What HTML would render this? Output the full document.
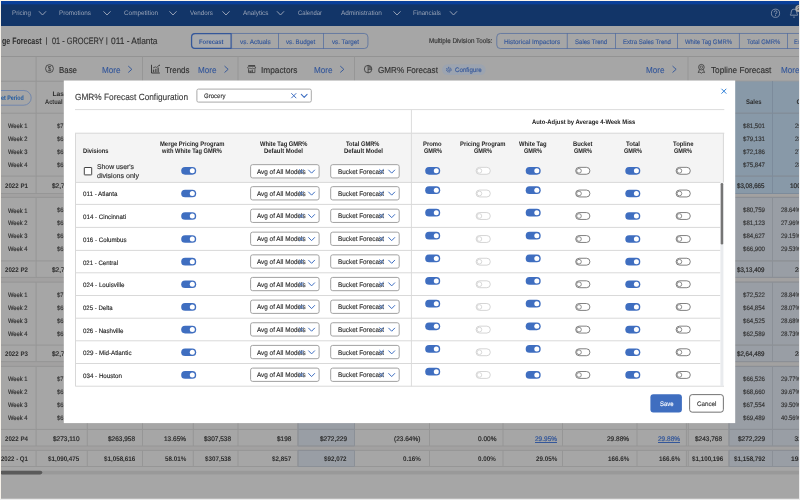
<!DOCTYPE html>
<html><head><meta charset="utf-8"><title>GMR% Forecast Configuration</title>
<style>
html,body{margin:0;padding:0;background:#ececec;}
body{width:800px;height:500px;overflow:hidden;position:relative;font-family:"Liberation Sans",sans-serif;}
#clip{position:absolute;left:1px;top:1px;width:798px;height:497px;overflow:hidden;background:#a6a6a6;}
.edge{position:absolute;}
#page{position:absolute;left:-1px;top:-1px;width:800px;height:500px;will-change:transform;}
#page div,#page span,#page svg{position:absolute;display:block;}
#page span{white-space:nowrap;transform-origin:0 50%;line-height:20px;text-rendering:geometricPrecision;}
</style></head><body>
<div class="edge" style="left:0;top:0;width:800px;height:1px;background:#fbf5ea"></div><div class="edge" style="left:0;top:0;width:1px;height:499px;background:#f7f2ea"></div><div class="edge" style="left:1px;top:498px;width:798px;height:1px;background:#b9b9b9"></div>
<div id="clip"><div id="page">
<svg style="left:0;top:0" width="800" height="500"><rect x="0" y="0" width="800" height="26" fill="#123568"/></svg>
<div style="left:0.00px;top:0.00px;width:800.00px;height:4.50px;background:linear-gradient(#0a409a 0%,#0a409a 70%,#123568 100%)"></div>
<span style="left:12.00px;top:4px;font-size:6.6px;color:#97a2b6;transform:scaleX(0.9418);">Pricing</span>
<svg style="left:0;top:0" width="800" height="500"><g transform="translate(38.25 10.6)"><path d="M1 1 L4.25 4.40 L7.50 1" fill="none" stroke="#97a2b6" stroke-width="1.0" stroke-linecap="round" stroke-linejoin="round"/></g></svg>
<span style="left:59.00px;top:4px;font-size:6.6px;color:#97a2b6;transform:scaleX(0.9586);">Promotions</span>
<svg style="left:0;top:0" width="800" height="500"><g transform="translate(102.75 10.6)"><path d="M1 1 L4.25 4.40 L7.50 1" fill="none" stroke="#97a2b6" stroke-width="1.0" stroke-linecap="round" stroke-linejoin="round"/></g></svg>
<span style="left:124.00px;top:4px;font-size:6.6px;color:#97a2b6;transform:scaleX(0.9654);">Competition</span>
<svg style="left:0;top:0" width="800" height="500"><g transform="translate(168.75 10.6)"><path d="M1 1 L4.25 4.40 L7.50 1" fill="none" stroke="#97a2b6" stroke-width="1.0" stroke-linecap="round" stroke-linejoin="round"/></g></svg>
<span style="left:189.50px;top:4px;font-size:6.6px;color:#97a2b6;transform:scaleX(0.9497);">Vendors</span>
<svg style="left:0;top:0" width="800" height="500"><g transform="translate(221.75 10.6)"><path d="M1 1 L4.25 4.40 L7.50 1" fill="none" stroke="#97a2b6" stroke-width="1.0" stroke-linecap="round" stroke-linejoin="round"/></g></svg>
<span style="left:242.50px;top:4px;font-size:6.6px;color:#97a2b6;transform:scaleX(0.9655);">Analytics</span>
<svg style="left:0;top:0" width="800" height="500"><g transform="translate(276.25 10.6)"><path d="M1 1 L4.25 4.40 L7.50 1" fill="none" stroke="#97a2b6" stroke-width="1.0" stroke-linecap="round" stroke-linejoin="round"/></g></svg>
<span style="left:298.00px;top:4px;font-size:6.6px;color:#97a2b6;transform:scaleX(0.8960);">Calendar</span>
<span style="left:341.00px;top:4px;font-size:6.6px;color:#97a2b6;transform:scaleX(0.9804);">Administration</span>
<svg style="left:0;top:0" width="800" height="500"><g transform="translate(392.75 10.6)"><path d="M1 1 L4.25 4.40 L7.50 1" fill="none" stroke="#97a2b6" stroke-width="1.0" stroke-linecap="round" stroke-linejoin="round"/></g></svg>
<span style="left:412.50px;top:4px;font-size:6.6px;color:#97a2b6;transform:scaleX(0.9423);">Financials</span>
<svg style="left:0;top:0" width="800" height="500"><g transform="translate(449.25 10.6)"><path d="M1 1 L4.25 4.40 L7.50 1" fill="none" stroke="#97a2b6" stroke-width="1.0" stroke-linecap="round" stroke-linejoin="round"/></g><g transform="translate(770 7.75)"><circle cx="5.5" cy="5.5" r="4.1" fill="none" stroke="#97a2b6" stroke-width="0.8"/><path d="M4.1 4.5 A1.45 1.45 0 1 1 5.5 5.9 L5.5 6.6" fill="none" stroke="#97a2b6" stroke-width="0.8"/><circle cx="5.5" cy="7.8" r="0.5" fill="#97a2b6"/></g><g transform="translate(788 7)"><path d="M2.4 8.2 L2.4 7.6 Q3.2 7 3.2 5 Q3.2 2.1 6 2.1 Q8.8 2.1 8.8 5 Q8.8 7 9.6 7.6 L9.6 8.2 Z" fill="none" stroke="#97a2b6" stroke-width="0.8" stroke-linejoin="round"/><path d="M5.2 10.1 L6.8 10.1" stroke="#97a2b6" stroke-width="0.8"/></g><rect x="795.3" y="5" width="7" height="7" rx="3.5" fill="#a8a8a8"/></svg>
<span style="left:797.30px;top:-1px;font-size:5px;color:#333;-webkit-text-stroke:0.13px;">2</span>
<span style="left:1.50px;top:31px;font-size:9.3px;color:#2e2e2e;font-weight:bold;transform:scaleX(0.7566);">ge Forecast</span>
<span style="left:45.46px;top:31px;font-size:8px;color:#303030;-webkit-text-stroke:0.13px;">|</span>
<span style="left:51.70px;top:31px;font-size:9.3px;color:#303030;-webkit-text-stroke:0.13px;transform:scaleX(0.7897);">01 - GROCERY</span>
<span style="left:105.76px;top:31px;font-size:8px;color:#303030;-webkit-text-stroke:0.13px;">|</span>
<span style="left:110.50px;top:31px;font-size:9.3px;color:#303030;-webkit-text-stroke:0.13px;transform:scaleX(0.9023);">011 - Atlanta</span>
<svg style="left:0;top:0" width="800" height="500"><path d="M195 33.1 H231.7 V48.9 H195 A4 4 0 0 1 191 44.9 V37.1 A4 4 0 0 1 195 33.1 Z" fill="#a8aaad"/><rect x="191.38" y="33.48" width="176.55" height="15.05" rx="3.62" fill="none" stroke="#526c9f" stroke-width="0.75"/><path d="M195 33.7 H231.1 V48.3 H195 A3.4 3.4 0 0 1 191.6 44.9 V37.1 A3.4 3.4 0 0 1 195 33.7 Z" fill="none" stroke="#34579a" stroke-width="1.2"/></svg>
<span style="left:199.10px;top:33px;font-size:6.6px;color:#34579a;font-weight:bold;transform:scaleX(0.8905);">Forecast</span>
<svg style="left:0;top:0" width="800" height="500"><rect x="231.32" y="33.1" width="0.75" height="15.8" fill="#526c9f"/></svg>
<span style="left:239.67px;top:33px;font-size:6.6px;color:#34579a;-webkit-text-stroke:0.13px;transform:scaleX(0.9747);">vs. Actuals</span>
<svg style="left:0;top:0" width="800" height="500"><rect x="278.02" y="33.1" width="0.75" height="15.8" fill="#526c9f"/></svg>
<span style="left:286.32px;top:33px;font-size:6.6px;color:#34579a;-webkit-text-stroke:0.13px;transform:scaleX(0.9379);">vs. Budget</span>
<svg style="left:0;top:0" width="800" height="500"><rect x="323.12" y="33.1" width="0.75" height="15.8" fill="#526c9f"/></svg>
<span style="left:332.40px;top:33px;font-size:6.6px;color:#34579a;-webkit-text-stroke:0.13px;transform:scaleX(0.9476);">vs. Target</span>
<span style="left:429.00px;top:32px;font-size:6.9px;color:#303030;-webkit-text-stroke:0.13px;transform:scaleX(0.9115);">Multiple Division Tools:</span>
<svg style="left:0;top:0" width="800" height="500"><rect x="496.77" y="33.48" width="332.85" height="15.05" rx="3.62" fill="none" stroke="#526c9f" stroke-width="0.75"/></svg>
<span style="left:503.67px;top:33px;font-size:6.6px;color:#34579a;-webkit-text-stroke:0.13px;transform:scaleX(0.9707);">Historical Impactors</span>
<svg style="left:0;top:0" width="800" height="500"><rect x="566.83" y="33.1" width="0.75" height="15.8" fill="#526c9f"/></svg>
<span style="left:575.23px;top:33px;font-size:6.6px;color:#34579a;-webkit-text-stroke:0.13px;transform:scaleX(0.9156);">Sales Trend</span>
<svg style="left:0;top:0" width="800" height="500"><rect x="615.12" y="33.1" width="0.75" height="15.8" fill="#526c9f"/></svg>
<span style="left:622.55px;top:33px;font-size:6.6px;color:#34579a;-webkit-text-stroke:0.13px;transform:scaleX(0.9150);">Extra Sales Trend</span>
<svg style="left:0;top:0" width="800" height="500"><rect x="677.23" y="33.1" width="0.75" height="15.8" fill="#526c9f"/></svg>
<span style="left:684.95px;top:33px;font-size:6.6px;color:#34579a;-webkit-text-stroke:0.13px;transform:scaleX(0.8982);">White Tag GMR%</span>
<svg style="left:0;top:0" width="800" height="500"><rect x="738.92" y="33.1" width="0.75" height="15.8" fill="#526c9f"/></svg>
<span style="left:746.83px;top:33px;font-size:6.6px;color:#34579a;-webkit-text-stroke:0.13px;transform:scaleX(0.8976);">Total GMR%</span>
<svg style="left:0;top:0" width="800" height="500"><rect x="787.23" y="33.1" width="0.75" height="15.8" fill="#526c9f"/></svg>
<span style="left:794.30px;top:33px;font-size:6.6px;color:#34579a;-webkit-text-stroke:0.13px;transform:scaleX(0.8593);">Extra Sales</span>
<svg style="left:0;top:0" width="800" height="500"><rect x="0" y="56" width="800" height="1" fill="#939393"/><rect x="35.6" y="56.5" width="1" height="24.5" fill="#969696"/><rect x="142" y="56.5" width="1" height="24.5" fill="#969696"/><rect x="237.5" y="56.5" width="1" height="24.5" fill="#969696"/><rect x="354" y="56.5" width="1" height="24.5" fill="#969696"/><rect x="687.5" y="56.5" width="1" height="24.5" fill="#969696"/><g transform="translate(44.5 63.6)"><circle cx="5" cy="5" r="3.95" fill="none" stroke="#303030" stroke-width="0.75"/><text x="5" y="7.2" font-size="6.4" text-anchor="middle" fill="#303030" font-family="Liberation Sans">$</text></g></svg>
<span style="left:59.00px;top:60px;font-size:8.7px;color:#303030;-webkit-text-stroke:0.13px;transform:scaleX(0.9077);">Base</span>
<span style="left:101.50px;top:60px;font-size:8.7px;color:#34579a;-webkit-text-stroke:0.13px;transform:scaleX(0.9333);">More</span>
<svg style="left:0;top:0" width="800" height="500"><g transform="translate(127.55 65.35)"><path d="M1 1 L4.30 3.95 L1 6.90" fill="none" stroke="#34579a" stroke-width="0.95" stroke-linecap="round" stroke-linejoin="round"/></g><g transform="translate(150.5 64)"><path d="M1 0.8 L1 9 L9.4 9" fill="none" stroke="#303030" stroke-width="0.9"/><rect x="2.4" y="5.6" width="1.3" height="2.7" fill="#4a4a4a"/><rect x="4.7" y="4.8" width="1.3" height="3.5" fill="#4a4a4a"/><rect x="7" y="3.6" width="1.3" height="4.7" fill="#4a4a4a"/><path d="M2.6 3.9 L4.9 2.9 L6.2 3.4 L8.8 1.2" fill="none" stroke="#303030" stroke-width="0.7"/><circle cx="8.8" cy="1.3" r="0.6" fill="#303030"/></g></svg>
<span style="left:165.00px;top:60px;font-size:8.7px;color:#303030;-webkit-text-stroke:0.13px;transform:scaleX(0.9157);">Trends</span>
<span style="left:198.00px;top:60px;font-size:8.7px;color:#34579a;-webkit-text-stroke:0.13px;transform:scaleX(0.9333);">More</span>
<svg style="left:0;top:0" width="800" height="500"><g transform="translate(223.85 65.35)"><path d="M1 1 L4.30 3.95 L1 6.90" fill="none" stroke="#34579a" stroke-width="0.95" stroke-linecap="round" stroke-linejoin="round"/></g><g transform="translate(246.7 64)"><path d="M1.6 1.5 H8.4" stroke="#303030" stroke-width="0.8"/><path d="M1.7 2.4 L0.9 4 Q1.7 5.1 2.6 4.2 Q3.4 5.1 4.2 4.2 Q5 5.1 5.8 4.2 Q6.6 5.1 7.4 4.2 Q8.3 5.1 9.1 4 L8.3 2.4 Z" fill="none" stroke="#303030" stroke-width="0.65"/><path d="M1.8 5.2 V8.6 H8.2 V5.2 M1.8 7.1 H5.7 M5.7 5.6 V8.6 M3.7 7.1 V8.6" fill="none" stroke="#303030" stroke-width="0.7"/></g></svg>
<span style="left:261.00px;top:60px;font-size:8.7px;color:#303030;-webkit-text-stroke:0.13px;transform:scaleX(0.9556);">Impactors</span>
<span style="left:314.00px;top:60px;font-size:8.7px;color:#34579a;-webkit-text-stroke:0.13px;transform:scaleX(0.9333);">More</span>
<svg style="left:0;top:0" width="800" height="500"><g transform="translate(339.55 65.35)"><path d="M1 1 L4.30 3.95 L1 6.90" fill="none" stroke="#34579a" stroke-width="0.95" stroke-linecap="round" stroke-linejoin="round"/></g><g transform="translate(363 64)"><circle cx="5.1" cy="5.1" r="3.75" fill="none" stroke="#303030" stroke-width="0.75"/><path d="M5.1 1.4 V8.8 M5.1 5.3 H8.8" fill="none" stroke="#303030" stroke-width="0.75"/><path d="M6.2 2.2 A2.6 2.6 0 0 1 8.1 4.2 L6.2 4.2 Z" fill="none" stroke="#303030" stroke-width="0.55"/></g></svg>
<span style="left:377.50px;top:60px;font-size:8.7px;color:#303030;-webkit-text-stroke:0.13px;transform:scaleX(0.9332);">GMR% Forecast</span>
<svg style="left:0;top:0" width="800" height="500"><rect x="442" y="64.3" width="43.7" height="10.8" rx="5.4" fill="#9ca4b0"/><g transform="translate(445.5 66.4)"><circle cx="3.3" cy="3.3" r="2.3" fill="none" stroke="#34579a" stroke-width="1" stroke-dasharray="1.1 0.7"/><circle cx="3.3" cy="3.3" r="1.1" fill="none" stroke="#34579a" stroke-width="0.6"/></g></svg>
<span style="left:454.50px;top:61px;font-size:6.6px;color:#34579a;-webkit-text-stroke:0.13px;transform:scaleX(0.9365);">Configure</span>
<span style="left:646.00px;top:60px;font-size:8.7px;color:#34579a;-webkit-text-stroke:0.13px;transform:scaleX(0.9333);">More</span>
<svg style="left:0;top:0" width="800" height="500"><g transform="translate(671.85 65.35)"><path d="M1 1 L4.30 3.95 L1 6.90" fill="none" stroke="#34579a" stroke-width="0.95" stroke-linecap="round" stroke-linejoin="round"/></g><g transform="translate(696.4 63.5)"><circle cx="5" cy="3.7" r="2.8" fill="none" stroke="#303030" stroke-width="0.75"/><circle cx="5" cy="3.7" r="1.2" fill="none" stroke="#303030" stroke-width="0.6"/><path d="M3.1 6 L1.8 9.1 L3.4 8.6 L5 9.7 L6.6 8.6 L8.2 9.1 L6.9 6" fill="none" stroke="#303030" stroke-width="0.7" stroke-linejoin="round"/></g></svg>
<span style="left:711.00px;top:60px;font-size:8.7px;color:#303030;-webkit-text-stroke:0.13px;transform:scaleX(0.9478);">Topline Forecast</span>
<span style="left:780.50px;top:60px;font-size:8.7px;color:#34579a;-webkit-text-stroke:0.13px;transform:scaleX(0.9333);">More</span>
<svg style="left:0;top:0" width="800" height="500"><rect x="0" y="80.7" width="800" height="1" fill="#959595"/><rect x="729" y="81.4" width="80" height="31.8" fill="#8899a8"/><rect x="729" y="113.2" width="80" height="80.3" fill="#8899a8"/><rect x="0" y="193.5" width="800" height="3.9" fill="#a2a1a1"/><rect x="729" y="197.4" width="80" height="80" fill="#999ea5"/><rect x="0" y="277.4" width="800" height="4.7" fill="#a2a1a1"/><rect x="729" y="282.1" width="80" height="79.5" fill="#999ea5"/><rect x="0" y="361.6" width="800" height="4.8" fill="#a2a1a1"/><rect x="729" y="366.4" width="80" height="79.6" fill="#999ea5"/><rect x="298" y="423" width="56.5" height="23" fill="#999ea5"/><rect x="0" y="446" width="800" height="4.4" fill="#a2a1a1"/><rect x="298" y="450.4" width="56.5" height="16.1" fill="#999ea5"/><rect x="729" y="450.4" width="80" height="16.1" fill="#999ea5"/><rect x="0" y="112.7" width="800" height="1" fill="#969696"/><rect x="0" y="175.6" width="800" height="1" fill="#969696"/><rect x="0" y="193" width="800" height="1" fill="#969696"/><rect x="35.6" y="113.2" width="1" height="80.3" fill="#969696"/><rect x="86.8" y="113.2" width="1" height="80.3" fill="#969696"/><rect x="142" y="113.2" width="1" height="80.3" fill="#969696"/><rect x="192.8" y="113.2" width="1" height="80.3" fill="#969696"/><rect x="237.5" y="113.2" width="1" height="80.3" fill="#969696"/><rect x="297.5" y="113.2" width="1" height="80.3" fill="#969696"/><rect x="354" y="113.2" width="1" height="80.3" fill="#969696"/><rect x="429" y="113.2" width="1" height="80.3" fill="#969696"/><rect x="502.5" y="113.2" width="1" height="80.3" fill="#969696"/><rect x="562" y="113.2" width="1" height="80.3" fill="#969696"/><rect x="636.5" y="113.2" width="1" height="80.3" fill="#969696"/><rect x="685.9" y="113.2" width="1" height="80.3" fill="#969696"/><rect x="687.8" y="113.2" width="1" height="80.3" fill="#969696"/><rect x="728.5" y="113.2" width="1" height="80.3" fill="#969696"/><rect x="772" y="113.2" width="1" height="80.3" fill="#969696"/><rect x="0" y="196.9" width="800" height="1" fill="#969696"/><rect x="0" y="260.4" width="800" height="1" fill="#969696"/><rect x="0" y="276.9" width="800" height="1" fill="#969696"/><rect x="35.6" y="197.4" width="1" height="80" fill="#969696"/><rect x="86.8" y="197.4" width="1" height="80" fill="#969696"/><rect x="142" y="197.4" width="1" height="80" fill="#969696"/><rect x="192.8" y="197.4" width="1" height="80" fill="#969696"/><rect x="237.5" y="197.4" width="1" height="80" fill="#969696"/><rect x="297.5" y="197.4" width="1" height="80" fill="#969696"/><rect x="354" y="197.4" width="1" height="80" fill="#969696"/><rect x="429" y="197.4" width="1" height="80" fill="#969696"/><rect x="502.5" y="197.4" width="1" height="80" fill="#969696"/><rect x="562" y="197.4" width="1" height="80" fill="#969696"/><rect x="636.5" y="197.4" width="1" height="80" fill="#969696"/><rect x="685.9" y="197.4" width="1" height="80" fill="#969696"/><rect x="687.8" y="197.4" width="1" height="80" fill="#969696"/><rect x="728.5" y="197.4" width="1" height="80" fill="#969696"/><rect x="772" y="197.4" width="1" height="80" fill="#969696"/><rect x="0" y="281.6" width="800" height="1" fill="#969696"/><rect x="0" y="344.6" width="800" height="1" fill="#969696"/><rect x="0" y="361.1" width="800" height="1" fill="#969696"/><rect x="35.6" y="282.1" width="1" height="79.5" fill="#969696"/><rect x="86.8" y="282.1" width="1" height="79.5" fill="#969696"/><rect x="142" y="282.1" width="1" height="79.5" fill="#969696"/><rect x="192.8" y="282.1" width="1" height="79.5" fill="#969696"/><rect x="237.5" y="282.1" width="1" height="79.5" fill="#969696"/><rect x="297.5" y="282.1" width="1" height="79.5" fill="#969696"/><rect x="354" y="282.1" width="1" height="79.5" fill="#969696"/><rect x="429" y="282.1" width="1" height="79.5" fill="#969696"/><rect x="502.5" y="282.1" width="1" height="79.5" fill="#969696"/><rect x="562" y="282.1" width="1" height="79.5" fill="#969696"/><rect x="636.5" y="282.1" width="1" height="79.5" fill="#969696"/><rect x="685.9" y="282.1" width="1" height="79.5" fill="#969696"/><rect x="687.8" y="282.1" width="1" height="79.5" fill="#969696"/><rect x="728.5" y="282.1" width="1" height="79.5" fill="#969696"/><rect x="772" y="282.1" width="1" height="79.5" fill="#969696"/><rect x="0" y="365.9" width="800" height="1" fill="#969696"/><rect x="0" y="428.9" width="800" height="1" fill="#969696"/><rect x="0" y="445.5" width="800" height="1" fill="#969696"/><rect x="35.6" y="366.4" width="1" height="79.6" fill="#969696"/><rect x="86.8" y="366.4" width="1" height="79.6" fill="#969696"/><rect x="142" y="366.4" width="1" height="79.6" fill="#969696"/><rect x="192.8" y="366.4" width="1" height="79.6" fill="#969696"/><rect x="237.5" y="366.4" width="1" height="79.6" fill="#969696"/><rect x="297.5" y="366.4" width="1" height="79.6" fill="#969696"/><rect x="354" y="366.4" width="1" height="79.6" fill="#969696"/><rect x="429" y="366.4" width="1" height="79.6" fill="#969696"/><rect x="502.5" y="366.4" width="1" height="79.6" fill="#969696"/><rect x="562" y="366.4" width="1" height="79.6" fill="#969696"/><rect x="636.5" y="366.4" width="1" height="79.6" fill="#969696"/><rect x="685.9" y="366.4" width="1" height="79.6" fill="#969696"/><rect x="687.8" y="366.4" width="1" height="79.6" fill="#969696"/><rect x="728.5" y="366.4" width="1" height="79.6" fill="#969696"/><rect x="772" y="366.4" width="1" height="79.6" fill="#969696"/><rect x="0" y="449.9" width="800" height="1" fill="#969696"/><rect x="0" y="466" width="800" height="1" fill="#969696"/><rect x="35.6" y="450.4" width="1" height="16.1" fill="#969696"/><rect x="86.8" y="450.4" width="1" height="16.1" fill="#969696"/><rect x="142" y="450.4" width="1" height="16.1" fill="#969696"/><rect x="192.8" y="450.4" width="1" height="16.1" fill="#969696"/><rect x="237.5" y="450.4" width="1" height="16.1" fill="#969696"/><rect x="297.5" y="450.4" width="1" height="16.1" fill="#969696"/><rect x="354" y="450.4" width="1" height="16.1" fill="#969696"/><rect x="429" y="450.4" width="1" height="16.1" fill="#969696"/><rect x="502.5" y="450.4" width="1" height="16.1" fill="#969696"/><rect x="562" y="450.4" width="1" height="16.1" fill="#969696"/><rect x="636.5" y="450.4" width="1" height="16.1" fill="#969696"/><rect x="685.9" y="450.4" width="1" height="16.1" fill="#969696"/><rect x="687.8" y="450.4" width="1" height="16.1" fill="#969696"/><rect x="728.5" y="450.4" width="1" height="16.1" fill="#969696"/><rect x="772" y="450.4" width="1" height="16.1" fill="#969696"/><rect x="35.6" y="81" width="1" height="32.2" fill="#969696"/><rect x="86.8" y="81" width="1" height="32.2" fill="#969696"/><rect x="728.5" y="81" width="1" height="32.2" fill="#969696"/><rect x="772" y="81" width="1" height="32.2" fill="#969696"/><rect x="729" y="112.7" width="71" height="1" fill="#7c8b9b"/><rect x="729" y="175.6" width="71" height="1" fill="#7c8b9b"/><rect x="729" y="193" width="71" height="1" fill="#7c8b9b"/><rect x="728.5" y="113.2" width="1" height="80.3" fill="#7c8b9b"/><rect x="772" y="113.2" width="1" height="80.3" fill="#7c8b9b"/><rect x="729" y="196.9" width="71" height="1" fill="#8b9097"/><rect x="729" y="260.4" width="71" height="1" fill="#8b9097"/><rect x="729" y="276.9" width="71" height="1" fill="#8b9097"/><rect x="728.5" y="197.4" width="1" height="80" fill="#8b9097"/><rect x="772" y="197.4" width="1" height="80" fill="#8b9097"/><rect x="729" y="281.6" width="71" height="1" fill="#8b9097"/><rect x="729" y="344.6" width="71" height="1" fill="#8b9097"/><rect x="729" y="361.1" width="71" height="1" fill="#8b9097"/><rect x="728.5" y="282.1" width="1" height="79.5" fill="#8b9097"/><rect x="772" y="282.1" width="1" height="79.5" fill="#8b9097"/><rect x="729" y="365.9" width="71" height="1" fill="#8b9097"/><rect x="729" y="428.9" width="71" height="1" fill="#8b9097"/><rect x="729" y="445.5" width="71" height="1" fill="#8b9097"/><rect x="728.5" y="366.4" width="1" height="79.6" fill="#8b9097"/><rect x="772" y="366.4" width="1" height="79.6" fill="#8b9097"/><rect x="728.5" y="81" width="1" height="32.2" fill="#7c8b9b"/><rect x="728.5" y="450.4" width="1" height="16.1" fill="#8b9097"/><rect x="772" y="81" width="1" height="32.2" fill="#7c8b9b"/><rect x="772" y="450.4" width="1" height="16.1" fill="#8b9097"/><rect x="729" y="449.9" width="71" height="1" fill="#8b9097"/><rect x="298" y="449.9" width="56.5" height="1" fill="#8b9097"/><rect x="729" y="466" width="71" height="1" fill="#8b9097"/><rect x="298" y="466" width="56.5" height="1" fill="#8b9097"/><rect x="298" y="428.9" width="56.5" height="1" fill="#8b9097"/><rect x="298" y="445.5" width="56.5" height="1" fill="#8b9097"/><rect x="297.5" y="423" width="1" height="23" fill="#8b9097"/><rect x="297.5" y="450.4" width="1" height="16.1" fill="#8b9097"/><rect x="354" y="423" width="1" height="23" fill="#8b9097"/><rect x="354" y="450.4" width="1" height="16.1" fill="#8b9097"/></svg>
<span style="left:8.00px;top:117px;font-size:6.5px;color:#282828;-webkit-text-stroke:0.13px;transform:scaleX(0.8897);">Week 1</span>
<span style="left:57.00px;top:117px;font-size:6.4px;color:#303030;-webkit-text-stroke:0.13px;transform:scaleX(0.9300);">$7</span>
<span style="left:742.70px;top:117px;font-size:6.4px;color:#303030;-webkit-text-stroke:0.13px;transform:scaleX(0.9509);">$81,501</span>
<span style="left:795.00px;top:117px;font-size:6.4px;color:#303030;-webkit-text-stroke:0.13px;transform:scaleX(0.9000);">29.64%</span>
<span style="left:8.00px;top:130px;font-size:6.5px;color:#282828;-webkit-text-stroke:0.13px;transform:scaleX(0.8897);">Week 2</span>
<span style="left:57.00px;top:130px;font-size:6.4px;color:#303030;-webkit-text-stroke:0.13px;transform:scaleX(0.9300);">$6</span>
<span style="left:742.70px;top:130px;font-size:6.4px;color:#303030;-webkit-text-stroke:0.13px;transform:scaleX(0.9509);">$79,131</span>
<span style="left:795.00px;top:130px;font-size:6.4px;color:#303030;-webkit-text-stroke:0.13px;transform:scaleX(0.9000);">28.96%</span>
<span style="left:8.00px;top:143px;font-size:6.5px;color:#282828;-webkit-text-stroke:0.13px;transform:scaleX(0.8897);">Week 3</span>
<span style="left:57.00px;top:143px;font-size:6.4px;color:#303030;-webkit-text-stroke:0.13px;transform:scaleX(0.9300);">$6</span>
<span style="left:742.70px;top:143px;font-size:6.4px;color:#303030;-webkit-text-stroke:0.13px;transform:scaleX(0.9509);">$72,186</span>
<span style="left:795.00px;top:143px;font-size:6.4px;color:#303030;-webkit-text-stroke:0.13px;transform:scaleX(0.9000);">27.15%</span>
<span style="left:8.00px;top:156px;font-size:6.5px;color:#282828;-webkit-text-stroke:0.13px;transform:scaleX(0.8897);">Week 4</span>
<span style="left:57.00px;top:156px;font-size:6.4px;color:#303030;-webkit-text-stroke:0.13px;transform:scaleX(0.9300);">$6</span>
<span style="left:742.70px;top:156px;font-size:6.4px;color:#303030;-webkit-text-stroke:0.13px;transform:scaleX(0.9509);">$75,847</span>
<span style="left:795.00px;top:156px;font-size:6.4px;color:#303030;-webkit-text-stroke:0.13px;transform:scaleX(0.9000);">28.53%</span>
<span style="left:5.00px;top:177px;font-size:6.7px;color:#2c2c2c;font-weight:bold;transform:scaleX(0.9214);">2022 P1</span>
<span style="left:52.00px;top:177px;font-size:6.7px;color:#2c2c2c;transform:scaleX(0.9700);-webkit-text-stroke:0.22px #2c2c2c;">$2,7</span>
<span style="left:737.20px;top:177px;font-size:6.7px;color:#2c2c2c;transform:scaleX(0.9226);-webkit-text-stroke:0.22px #2c2c2c;">$3,08,665</span>
<span style="left:790.00px;top:177px;font-size:6.7px;color:#2c2c2c;transform:scaleX(0.9700);-webkit-text-stroke:0.22px #2c2c2c;">100</span>
<span style="left:8.00px;top:202px;font-size:6.5px;color:#282828;-webkit-text-stroke:0.13px;transform:scaleX(0.8897);">Week 1</span>
<span style="left:57.00px;top:201px;font-size:6.4px;color:#303030;-webkit-text-stroke:0.13px;transform:scaleX(0.9300);">$6</span>
<span style="left:742.70px;top:201px;font-size:6.4px;color:#303030;-webkit-text-stroke:0.13px;transform:scaleX(0.9509);">$80,759</span>
<span style="left:780.60px;top:201px;font-size:6.4px;color:#303030;-webkit-text-stroke:0.13px;transform:scaleX(0.9000);">28.64%</span>
<span style="left:8.00px;top:214px;font-size:6.5px;color:#282828;-webkit-text-stroke:0.13px;transform:scaleX(0.8897);">Week 2</span>
<span style="left:57.00px;top:214px;font-size:6.4px;color:#303030;-webkit-text-stroke:0.13px;transform:scaleX(0.9300);">$6</span>
<span style="left:742.70px;top:214px;font-size:6.4px;color:#303030;-webkit-text-stroke:0.13px;transform:scaleX(0.9509);">$81,123</span>
<span style="left:780.60px;top:214px;font-size:6.4px;color:#303030;-webkit-text-stroke:0.13px;transform:scaleX(0.9000);">27.96%</span>
<span style="left:8.00px;top:227px;font-size:6.5px;color:#282828;-webkit-text-stroke:0.13px;transform:scaleX(0.8897);">Week 3</span>
<span style="left:57.00px;top:227px;font-size:6.4px;color:#303030;-webkit-text-stroke:0.13px;transform:scaleX(0.9300);">$6</span>
<span style="left:742.70px;top:227px;font-size:6.4px;color:#303030;-webkit-text-stroke:0.13px;transform:scaleX(0.9509);">$84,627</span>
<span style="left:780.60px;top:227px;font-size:6.4px;color:#303030;-webkit-text-stroke:0.13px;transform:scaleX(0.9000);">29.15%</span>
<span style="left:8.00px;top:240px;font-size:6.5px;color:#282828;-webkit-text-stroke:0.13px;transform:scaleX(0.8897);">Week 4</span>
<span style="left:57.00px;top:240px;font-size:6.4px;color:#303030;-webkit-text-stroke:0.13px;transform:scaleX(0.9300);">$6</span>
<span style="left:742.70px;top:240px;font-size:6.4px;color:#303030;-webkit-text-stroke:0.13px;transform:scaleX(0.9509);">$66,900</span>
<span style="left:780.60px;top:240px;font-size:6.4px;color:#303030;-webkit-text-stroke:0.13px;transform:scaleX(0.9000);">29.53%</span>
<span style="left:5.00px;top:261px;font-size:6.7px;color:#2c2c2c;font-weight:bold;transform:scaleX(0.9214);">2022 P2</span>
<span style="left:52.00px;top:261px;font-size:6.7px;color:#2c2c2c;transform:scaleX(0.9700);-webkit-text-stroke:0.22px #2c2c2c;">$2,7</span>
<span style="left:737.20px;top:261px;font-size:6.7px;color:#2c2c2c;transform:scaleX(0.9226);-webkit-text-stroke:0.22px #2c2c2c;">$3,13,409</span>
<span style="left:795.00px;top:261px;font-size:6.7px;color:#2c2c2c;transform:scaleX(0.9700);-webkit-text-stroke:0.22px #2c2c2c;">28.</span>
<span style="left:8.00px;top:286px;font-size:6.5px;color:#282828;-webkit-text-stroke:0.13px;transform:scaleX(0.8897);">Week 1</span>
<span style="left:57.00px;top:286px;font-size:6.4px;color:#303030;-webkit-text-stroke:0.13px;transform:scaleX(0.9300);">$7</span>
<span style="left:742.70px;top:286px;font-size:6.4px;color:#303030;-webkit-text-stroke:0.13px;transform:scaleX(0.9509);">$72,522</span>
<span style="left:780.60px;top:286px;font-size:6.4px;color:#303030;-webkit-text-stroke:0.13px;transform:scaleX(0.9000);">28.84%</span>
<span style="left:8.00px;top:299px;font-size:6.5px;color:#282828;-webkit-text-stroke:0.13px;transform:scaleX(0.8897);">Week 2</span>
<span style="left:57.00px;top:299px;font-size:6.4px;color:#303030;-webkit-text-stroke:0.13px;transform:scaleX(0.9300);">$6</span>
<span style="left:742.70px;top:299px;font-size:6.4px;color:#303030;-webkit-text-stroke:0.13px;transform:scaleX(0.9509);">$64,854</span>
<span style="left:780.60px;top:299px;font-size:6.4px;color:#303030;-webkit-text-stroke:0.13px;transform:scaleX(0.9000);">28.07%</span>
<span style="left:8.00px;top:312px;font-size:6.5px;color:#282828;-webkit-text-stroke:0.13px;transform:scaleX(0.8897);">Week 3</span>
<span style="left:57.00px;top:312px;font-size:6.4px;color:#303030;-webkit-text-stroke:0.13px;transform:scaleX(0.9300);">$6</span>
<span style="left:742.70px;top:312px;font-size:6.4px;color:#303030;-webkit-text-stroke:0.13px;transform:scaleX(0.9509);">$64,525</span>
<span style="left:780.60px;top:312px;font-size:6.4px;color:#303030;-webkit-text-stroke:0.13px;transform:scaleX(0.9000);">28.68%</span>
<span style="left:8.00px;top:325px;font-size:6.5px;color:#282828;-webkit-text-stroke:0.13px;transform:scaleX(0.8897);">Week 4</span>
<span style="left:57.00px;top:325px;font-size:6.4px;color:#303030;-webkit-text-stroke:0.13px;transform:scaleX(0.9300);">$6</span>
<span style="left:742.70px;top:325px;font-size:6.4px;color:#303030;-webkit-text-stroke:0.13px;transform:scaleX(0.9509);">$62,589</span>
<span style="left:780.60px;top:325px;font-size:6.4px;color:#303030;-webkit-text-stroke:0.13px;transform:scaleX(0.9000);">28.73%</span>
<span style="left:5.00px;top:345px;font-size:6.7px;color:#2c2c2c;font-weight:bold;transform:scaleX(0.9214);">2022 P3</span>
<span style="left:52.00px;top:345px;font-size:6.7px;color:#2c2c2c;transform:scaleX(0.9700);-webkit-text-stroke:0.22px #2c2c2c;">$2,7</span>
<span style="left:737.20px;top:345px;font-size:6.7px;color:#2c2c2c;transform:scaleX(0.9226);-webkit-text-stroke:0.22px #2c2c2c;">$2,64,489</span>
<span style="left:795.00px;top:345px;font-size:6.7px;color:#2c2c2c;transform:scaleX(0.9700);-webkit-text-stroke:0.22px #2c2c2c;">28.</span>
<span style="left:8.00px;top:370px;font-size:6.5px;color:#282828;-webkit-text-stroke:0.13px;transform:scaleX(0.8897);">Week 1</span>
<span style="left:57.00px;top:370px;font-size:6.4px;color:#303030;-webkit-text-stroke:0.13px;transform:scaleX(0.9300);">$7</span>
<span style="left:742.70px;top:370px;font-size:6.4px;color:#303030;-webkit-text-stroke:0.13px;transform:scaleX(0.9509);">$66,526</span>
<span style="left:780.60px;top:370px;font-size:6.4px;color:#303030;-webkit-text-stroke:0.13px;transform:scaleX(0.9000);">29.77%</span>
<span style="left:8.00px;top:383px;font-size:6.5px;color:#282828;-webkit-text-stroke:0.13px;transform:scaleX(0.8897);">Week 2</span>
<span style="left:57.00px;top:383px;font-size:6.4px;color:#303030;-webkit-text-stroke:0.13px;transform:scaleX(0.9300);">$6</span>
<span style="left:742.70px;top:383px;font-size:6.4px;color:#303030;-webkit-text-stroke:0.13px;transform:scaleX(0.9509);">$68,660</span>
<span style="left:780.60px;top:383px;font-size:6.4px;color:#303030;-webkit-text-stroke:0.13px;transform:scaleX(0.9000);">39.67%</span>
<span style="left:8.00px;top:396px;font-size:6.5px;color:#282828;-webkit-text-stroke:0.13px;transform:scaleX(0.8897);">Week 3</span>
<span style="left:57.00px;top:396px;font-size:6.4px;color:#303030;-webkit-text-stroke:0.13px;transform:scaleX(0.9300);">$6</span>
<span style="left:742.70px;top:396px;font-size:6.4px;color:#303030;-webkit-text-stroke:0.13px;transform:scaleX(0.9509);">$67,554</span>
<span style="left:780.60px;top:396px;font-size:6.4px;color:#303030;-webkit-text-stroke:0.13px;transform:scaleX(0.9000);">39.50%</span>
<span style="left:8.00px;top:409px;font-size:6.5px;color:#282828;-webkit-text-stroke:0.13px;transform:scaleX(0.8897);">Week 4</span>
<span style="left:57.00px;top:409px;font-size:6.4px;color:#303030;-webkit-text-stroke:0.13px;transform:scaleX(0.9300);">$6</span>
<span style="left:742.70px;top:409px;font-size:6.4px;color:#303030;-webkit-text-stroke:0.13px;transform:scaleX(0.9509);">$69,489</span>
<span style="left:780.60px;top:409px;font-size:6.4px;color:#303030;-webkit-text-stroke:0.13px;transform:scaleX(0.9000);">40.56%</span>
<svg style="left:0;top:0" width="800" height="500"><rect x="-9.6" y="90.5" width="40.8" height="14.7" rx="7.35" fill="none" stroke="#647fad" stroke-width="0.8"/></svg>
<span style="left:1.40px;top:89px;font-size:6.6px;color:#215aa0;font-weight:bold;transform:scaleX(0.8073);">et Period</span>
<span style="left:52.50px;top:85px;font-size:6.7px;color:#2c2c2c;font-weight:bold;">Last</span>
<span style="left:44.50px;top:93px;font-size:6.7px;color:#2c2c2c;font-weight:bold;transform:scaleX(0.8546);">Actual</span>
<span style="left:745.85px;top:93px;font-size:6.7px;color:#2c2c2c;font-weight:bold;transform:scaleX(0.8852);">Sales</span>
<span style="left:796.50px;top:93px;font-size:6.7px;color:#2c2c2c;font-weight:bold;">GMR%</span>
<span style="left:5.00px;top:430px;font-size:6.7px;color:#2c2c2c;font-weight:bold;transform:scaleX(0.9214);">2022 P4</span>
<span style="left:52.97px;top:430px;font-size:6.7px;color:#2c2c2c;transform:scaleX(0.9700);-webkit-text-stroke:0.22px #2c2c2c;">$273,110</span>
<span style="left:108.09px;top:430px;font-size:6.7px;color:#2c2c2c;transform:scaleX(0.9700);-webkit-text-stroke:0.22px #2c2c2c;">$263,958</span>
<span style="left:164.16px;top:430px;font-size:6.7px;color:#2c2c2c;transform:scaleX(0.9700);-webkit-text-stroke:0.22px #2c2c2c;">13.65%</span>
<span style="left:203.89px;top:430px;font-size:6.7px;color:#2c2c2c;transform:scaleX(0.9700);-webkit-text-stroke:0.22px #2c2c2c;">$307,538</span>
<span style="left:276.54px;top:430px;font-size:6.7px;color:#2c2c2c;transform:scaleX(0.9700);-webkit-text-stroke:0.22px #2c2c2c;">$198</span>
<span style="left:319.89px;top:430px;font-size:6.7px;color:#2c2c2c;transform:scaleX(0.9700);-webkit-text-stroke:0.22px #2c2c2c;">$272,229</span>
<span style="left:394.13px;top:430px;font-size:6.7px;color:#2c2c2c;transform:scaleX(0.9700);-webkit-text-stroke:0.22px #2c2c2c;">(23.64%)</span>
<span style="left:477.57px;top:430px;font-size:6.7px;color:#2c2c2c;transform:scaleX(0.9700);-webkit-text-stroke:0.22px #2c2c2c;">0.00%</span>
<span style="left:534.96px;top:430px;font-size:6.7px;color:#34579a;transform:scaleX(0.9700);text-decoration:underline;text-decoration-thickness:0.5px;text-underline-offset:1px;-webkit-text-stroke:0.22px #34579a;">29.95%</span>
<span style="left:606.96px;top:430px;font-size:6.7px;color:#2c2c2c;transform:scaleX(0.9700);-webkit-text-stroke:0.22px #2c2c2c;">29.88%</span>
<span style="left:657.96px;top:430px;font-size:6.7px;color:#34579a;transform:scaleX(0.9700);text-decoration:underline;text-decoration-thickness:0.5px;text-underline-offset:1px;-webkit-text-stroke:0.22px #34579a;">29.88%</span>
<span style="left:694.89px;top:430px;font-size:6.7px;color:#2c2c2c;transform:scaleX(0.9700);-webkit-text-stroke:0.22px #2c2c2c;">$243,768</span>
<span style="left:737.89px;top:430px;font-size:6.7px;color:#2c2c2c;transform:scaleX(0.9700);-webkit-text-stroke:0.22px #2c2c2c;">$272,229</span>
<span style="left:794.60px;top:430px;font-size:6.7px;color:#2c2c2c;-webkit-text-stroke:0.22px #2c2c2c;">32.</span>
<span style="left:1.00px;top:450px;font-size:6.7px;color:#2c2c2c;font-weight:bold;transform:scaleX(0.9061);">2022 - Q1</span>
<span style="left:48.25px;top:450px;font-size:6.7px;color:#2c2c2c;font-weight:bold;transform:scaleX(0.9350);">$1,090,475</span>
<span style="left:103.85px;top:450px;font-size:6.7px;color:#2c2c2c;font-weight:bold;transform:scaleX(0.9350);">$1,058,616</span>
<span style="left:164.95px;top:450px;font-size:6.7px;color:#2c2c2c;font-weight:bold;transform:scaleX(0.9350);">58.01%</span>
<span style="left:204.87px;top:450px;font-size:6.7px;color:#2c2c2c;font-weight:bold;transform:scaleX(0.9350);">$307,538</span>
<span style="left:271.84px;top:450px;font-size:6.7px;color:#2c2c2c;font-weight:bold;transform:scaleX(0.9350);">$2,857</span>
<span style="left:324.35px;top:450px;font-size:6.7px;color:#2c2c2c;font-weight:bold;transform:scaleX(0.9350);">$92,072</span>
<span style="left:402.74px;top:450px;font-size:6.7px;color:#2c2c2c;font-weight:bold;transform:scaleX(0.9350);">0.16%</span>
<span style="left:478.24px;top:450px;font-size:6.7px;color:#2c2c2c;font-weight:bold;transform:scaleX(0.9350);">0.00%</span>
<span style="left:535.75px;top:450px;font-size:6.7px;color:#2c2c2c;font-weight:bold;transform:scaleX(0.9350);">29.05%</span>
<span style="left:607.75px;top:450px;font-size:6.7px;color:#2c2c2c;font-weight:bold;transform:scaleX(0.9350);">166.6%</span>
<span style="left:658.75px;top:450px;font-size:6.7px;color:#2c2c2c;font-weight:bold;transform:scaleX(0.9350);">166.6%</span>
<span style="left:692.15px;top:450px;font-size:6.7px;color:#2c2c2c;font-weight:bold;transform:scaleX(0.9350);">$1,100,196</span>
<span style="left:733.65px;top:450px;font-size:6.7px;color:#2c2c2c;font-weight:bold;transform:scaleX(0.9350);">$1,158,792</span>
<span style="left:791.00px;top:450px;font-size:6.7px;color:#2c2c2c;font-weight:bold;">198</span>
<svg style="left:0;top:0" width="800" height="500"><rect x="0" y="470.8" width="800" height="3.6" fill="#999999"/><rect x="0" y="470.8" width="42.3" height="3.6" rx="2" fill="#5a5a5a"/><rect x="63.8" y="80.5" width="671.4" height="342.6" fill="#fff"/></svg>
<span style="left:75.00px;top:87px;font-size:9px;color:#3a3a3a;-webkit-text-stroke:0.13px;transform:scaleX(0.9221);">GMR% Forecast Configuration</span>
<svg style="left:0;top:0" width="800" height="500"><rect x="196.9" y="89.1" width="114.4" height="13" rx="1.5" fill="#fff" stroke="#a9a9a9" stroke-width="1"/></svg>
<span style="left:203.80px;top:87px;font-size:6.3px;color:#333;-webkit-text-stroke:0.13px;transform:scaleX(0.9596);">Grocery</span>
<svg style="left:0;top:0" width="800" height="500"><g transform="translate(290.6 92.5)"><path d="M1 1 L5.4 5.4 M5.4 1 L1 5.4" stroke="#3f6fc2" stroke-width="1.0" stroke-linecap="round"/></g><g transform="translate(300.3 93.4)"><path d="M1 1 L3.90 4.00 L6.80 1" fill="none" stroke="#3f6fc2" stroke-width="1.1" stroke-linecap="round" stroke-linejoin="round"/></g><g transform="translate(720.75 88.05)"><path d="M1 1 L5.3 5.3 M5.3 1 L1 5.3" stroke="#2f80d8" stroke-width="1.0" stroke-linecap="round"/></g><rect x="75" y="109.1" width="649.3" height="1" fill="#dcdcdc"/><rect x="75.5" y="133.2" width="647.9" height="49.3" fill="#f4f4f4"/><rect x="75" y="132.7" width="649.3" height="1" fill="#d8d8d8"/><rect x="410.9" y="109.6" width="1" height="276.7" fill="#dcdcdc"/><rect x="75" y="133.2" width="1" height="253.1" fill="#d8d8d8"/><rect x="722.9" y="133.2" width="1" height="49.3" fill="#d8d8d8"/></svg>
<span style="left:531.65px;top:113px;font-size:6.4px;color:#222;font-weight:bold;transform:scaleX(0.9200);">Auto-Adjust by Average 4-Week Miss</span>
<svg style="left:0;top:0" width="800" height="500"><rect x="75.5" y="181.9" width="644.9" height="1" fill="#d9d9d9"/><rect x="75.5" y="203.9" width="644.9" height="1" fill="#d9d9d9"/><rect x="75.5" y="226.9" width="644.9" height="1" fill="#d9d9d9"/><rect x="75.5" y="249.9" width="644.9" height="1" fill="#d9d9d9"/><rect x="75.5" y="272.3" width="644.9" height="1" fill="#d9d9d9"/><rect x="75.5" y="295" width="644.9" height="1" fill="#d9d9d9"/><rect x="75.5" y="317.7" width="644.9" height="1" fill="#d9d9d9"/><rect x="75.5" y="340.3" width="644.9" height="1" fill="#d9d9d9"/><rect x="75.5" y="363" width="644.9" height="1" fill="#d9d9d9"/><rect x="75.5" y="385.7" width="648.5" height="1" fill="#d9d9d9"/><rect x="720.4" y="182.5" width="3" height="203.8" fill="#e9ebee"/><rect x="720.7" y="183" width="2.5" height="61.5" rx="1.25" fill="#757575"/></svg>
<span style="left:82.50px;top:142px;font-size:6.7px;color:#222;font-weight:bold;transform:scaleX(0.8561);">Divisions</span>
<span style="left:159.95px;top:135px;font-size:6.7px;color:#222;font-weight:bold;transform:scaleX(0.8749);">Merge Pricing Program</span>
<span style="left:162.20px;top:142px;font-size:6.7px;color:#222;font-weight:bold;transform:scaleX(0.8545);">with White Tag GMR%</span>
<span style="left:260.05px;top:135px;font-size:6.7px;color:#222;font-weight:bold;transform:scaleX(0.8642);">White Tag GMR%</span>
<span style="left:264.30px;top:142px;font-size:6.7px;color:#222;font-weight:bold;transform:scaleX(0.8879);">Default Model</span>
<span style="left:346.35px;top:135px;font-size:6.7px;color:#222;font-weight:bold;transform:scaleX(0.8599);">Total GMR%</span>
<span style="left:343.60px;top:142px;font-size:6.7px;color:#222;font-weight:bold;transform:scaleX(0.8879);">Default Model</span>
<span style="left:423.45px;top:135px;font-size:6.7px;color:#222;font-weight:bold;transform:scaleX(0.8719);">Promo</span>
<span style="left:423.70px;top:142px;font-size:6.7px;color:#222;font-weight:bold;transform:scaleX(0.8338);">GMR%</span>
<span style="left:460.45px;top:135px;font-size:6.7px;color:#222;font-weight:bold;transform:scaleX(0.8729);">Pricing Program</span>
<span style="left:474.20px;top:142px;font-size:6.7px;color:#222;font-weight:bold;transform:scaleX(0.8338);">GMR%</span>
<span style="left:519.45px;top:135px;font-size:6.7px;color:#222;font-weight:bold;transform:scaleX(0.8727);">White Tag</span>
<span style="left:524.20px;top:142px;font-size:6.7px;color:#222;font-weight:bold;transform:scaleX(0.8338);">GMR%</span>
<span style="left:573.05px;top:135px;font-size:6.7px;color:#222;font-weight:bold;transform:scaleX(0.8728);">Bucket</span>
<span style="left:573.80px;top:142px;font-size:6.7px;color:#222;font-weight:bold;transform:scaleX(0.8338);">GMR%</span>
<span style="left:625.80px;top:135px;font-size:6.7px;color:#222;font-weight:bold;transform:scaleX(0.9028);">Total</span>
<span style="left:623.80px;top:142px;font-size:6.7px;color:#222;font-weight:bold;transform:scaleX(0.8338);">GMR%</span>
<span style="left:672.95px;top:135px;font-size:6.7px;color:#222;font-weight:bold;transform:scaleX(0.8790);">Topline</span>
<span style="left:674.20px;top:142px;font-size:6.7px;color:#222;font-weight:bold;transform:scaleX(0.8338);">GMR%</span>
<svg style="left:0;top:0" width="800" height="500"><rect x="84.3" y="167.5" width="7.4" height="7.4" rx="0.3" fill="#fff" stroke="#444" stroke-width="1"/></svg>
<span style="left:97.00px;top:158px;font-size:6.9px;color:#2a2a2a;-webkit-text-stroke:0.13px;transform:scaleX(0.9901);">Show user's</span>
<span style="left:97.00px;top:167px;font-size:6.9px;color:#2a2a2a;-webkit-text-stroke:0.13px;transform:scaleX(1.0235);">divisions only</span>
<svg style="left:0;top:0" width="800" height="500"><rect x="181.2" y="166.95" width="15" height="7.7" rx="3.85" fill="#3f6ec0"/><circle cx="192.3" cy="170.8" r="2.5" fill="#fff"/><rect x="250.6" y="164.65" width="68.5" height="13.3" rx="2" fill="#fff" stroke="#a2a2a2" stroke-width="1"/></svg>
<span style="left:257.40px;top:163px;font-size:6.7px;color:#2a2a2a;-webkit-text-stroke:0.13px;transform:scaleX(0.9498);">Avg of All Models</span>
<svg style="left:0;top:0" width="800" height="500"><g transform="translate(298.5 168.5)"><path d="M1 1 L4.8 4.8 M4.8 1 L1 4.8" stroke="#4a78c8" stroke-width="0.9" stroke-linecap="round"/></g><g transform="translate(307.6 169.05)"><path d="M1 1 L4.00 4.10 L7.00 1" fill="none" stroke="#3f6fc2" stroke-width="1.0" stroke-linecap="round" stroke-linejoin="round"/></g><rect x="330.7" y="164.65" width="68.5" height="13.3" rx="2" fill="#fff" stroke="#a2a2a2" stroke-width="1"/></svg>
<span style="left:337.50px;top:163px;font-size:6.7px;color:#2a2a2a;-webkit-text-stroke:0.13px;transform:scaleX(0.9502);">Bucket Forecast</span>
<svg style="left:0;top:0" width="800" height="500"><g transform="translate(378.6 168.5)"><path d="M1 1 L4.8 4.8 M4.8 1 L1 4.8" stroke="#4a78c8" stroke-width="0.9" stroke-linecap="round"/></g><g transform="translate(387.7 169.05)"><path d="M1 1 L4.00 4.10 L7.00 1" fill="none" stroke="#3f6fc2" stroke-width="1.0" stroke-linecap="round" stroke-linejoin="round"/></g><rect x="425.2" y="166.95" width="15" height="7.7" rx="3.85" fill="#3f6ec0"/><circle cx="436.3" cy="170.8" r="2.5" fill="#fff"/><rect x="476.1" y="167.35" width="14.2" height="6.9" rx="3.45" fill="#fff" stroke="#cacaca" stroke-width="0.8"/><circle cx="479.4" cy="170.8" r="2.35" fill="#fff" stroke="#cacaca" stroke-width="0.7"/><rect x="525.7" y="166.95" width="15" height="7.7" rx="3.85" fill="#3f6ec0"/><circle cx="536.8" cy="170.8" r="2.5" fill="#fff"/><rect x="575.7" y="167.35" width="14.2" height="6.9" rx="3.45" fill="#fff" stroke="#626262" stroke-width="0.8"/><circle cx="579" cy="170.8" r="2.35" fill="#fff" stroke="#626262" stroke-width="0.7"/><rect x="625.3" y="166.95" width="15" height="7.7" rx="3.85" fill="#3f6ec0"/><circle cx="636.4" cy="170.8" r="2.5" fill="#fff"/><rect x="676.1" y="167.35" width="14.2" height="6.9" rx="3.45" fill="#fff" stroke="#626262" stroke-width="0.8"/><circle cx="679.4" cy="170.8" r="2.35" fill="#fff" stroke="#626262" stroke-width="0.7"/></svg>
<span style="left:82.50px;top:185px;font-size:6.5px;color:#1e1e1e;-webkit-text-stroke:0.13px;transform:scaleX(0.9579);">011 - Atlanta</span>
<svg style="left:0;top:0" width="800" height="500"><rect x="181.2" y="189.65" width="15" height="7.7" rx="3.85" fill="#3f6ec0"/><circle cx="192.3" cy="193.5" r="2.5" fill="#fff"/><rect x="250.6" y="186.65" width="68.5" height="13.3" rx="2" fill="#fff" stroke="#a2a2a2" stroke-width="1"/></svg>
<span style="left:257.40px;top:185px;font-size:6.7px;color:#2a2a2a;-webkit-text-stroke:0.13px;transform:scaleX(0.9498);">Avg of All Models</span>
<svg style="left:0;top:0" width="800" height="500"><g transform="translate(298.5 190.5)"><path d="M1 1 L4.8 4.8 M4.8 1 L1 4.8" stroke="#4a78c8" stroke-width="0.9" stroke-linecap="round"/></g><g transform="translate(307.6 191.05)"><path d="M1 1 L4.00 4.10 L7.00 1" fill="none" stroke="#3f6fc2" stroke-width="1.0" stroke-linecap="round" stroke-linejoin="round"/></g><rect x="330.7" y="186.65" width="68.5" height="13.3" rx="2" fill="#fff" stroke="#a2a2a2" stroke-width="1"/></svg>
<span style="left:337.50px;top:185px;font-size:6.7px;color:#2a2a2a;-webkit-text-stroke:0.13px;transform:scaleX(0.9502);">Bucket Forecast</span>
<svg style="left:0;top:0" width="800" height="500"><g transform="translate(378.6 190.5)"><path d="M1 1 L4.8 4.8 M4.8 1 L1 4.8" stroke="#4a78c8" stroke-width="0.9" stroke-linecap="round"/></g><g transform="translate(387.7 191.05)"><path d="M1 1 L4.00 4.10 L7.00 1" fill="none" stroke="#3f6fc2" stroke-width="1.0" stroke-linecap="round" stroke-linejoin="round"/></g><rect x="425.2" y="186.35" width="15" height="7.7" rx="3.85" fill="#3f6ec0"/><circle cx="436.3" cy="190.2" r="2.5" fill="#fff"/><rect x="476.1" y="190.05" width="14.2" height="6.9" rx="3.45" fill="#fff" stroke="#cacaca" stroke-width="0.8"/><circle cx="479.4" cy="193.5" r="2.35" fill="#fff" stroke="#cacaca" stroke-width="0.7"/><rect x="525.7" y="186.35" width="15" height="7.7" rx="3.85" fill="#3f6ec0"/><circle cx="536.8" cy="190.2" r="2.5" fill="#fff"/><rect x="575.7" y="190.05" width="14.2" height="6.9" rx="3.45" fill="#fff" stroke="#626262" stroke-width="0.8"/><circle cx="579" cy="193.5" r="2.35" fill="#fff" stroke="#626262" stroke-width="0.7"/><rect x="625.3" y="189.65" width="15" height="7.7" rx="3.85" fill="#3f6ec0"/><circle cx="636.4" cy="193.5" r="2.5" fill="#fff"/><rect x="676.1" y="190.05" width="14.2" height="6.9" rx="3.45" fill="#fff" stroke="#626262" stroke-width="0.8"/><circle cx="679.4" cy="193.5" r="2.35" fill="#fff" stroke="#626262" stroke-width="0.7"/></svg>
<span style="left:82.50px;top:208px;font-size:6.5px;color:#1e1e1e;-webkit-text-stroke:0.13px;transform:scaleX(0.9521);">014 - Cincinnati</span>
<svg style="left:0;top:0" width="800" height="500"><rect x="181.2" y="212.15" width="15" height="7.7" rx="3.85" fill="#3f6ec0"/><circle cx="192.3" cy="216" r="2.5" fill="#fff"/><rect x="250.6" y="209.15" width="68.5" height="13.3" rx="2" fill="#fff" stroke="#a2a2a2" stroke-width="1"/></svg>
<span style="left:257.40px;top:207px;font-size:6.7px;color:#2a2a2a;-webkit-text-stroke:0.13px;transform:scaleX(0.9498);">Avg of All Models</span>
<svg style="left:0;top:0" width="800" height="500"><g transform="translate(298.5 213)"><path d="M1 1 L4.8 4.8 M4.8 1 L1 4.8" stroke="#4a78c8" stroke-width="0.9" stroke-linecap="round"/></g><g transform="translate(307.6 213.55)"><path d="M1 1 L4.00 4.10 L7.00 1" fill="none" stroke="#3f6fc2" stroke-width="1.0" stroke-linecap="round" stroke-linejoin="round"/></g><rect x="330.7" y="209.15" width="68.5" height="13.3" rx="2" fill="#fff" stroke="#a2a2a2" stroke-width="1"/></svg>
<span style="left:337.50px;top:207px;font-size:6.7px;color:#2a2a2a;-webkit-text-stroke:0.13px;transform:scaleX(0.9502);">Bucket Forecast</span>
<svg style="left:0;top:0" width="800" height="500"><g transform="translate(378.6 213)"><path d="M1 1 L4.8 4.8 M4.8 1 L1 4.8" stroke="#4a78c8" stroke-width="0.9" stroke-linecap="round"/></g><g transform="translate(387.7 213.55)"><path d="M1 1 L4.00 4.10 L7.00 1" fill="none" stroke="#3f6fc2" stroke-width="1.0" stroke-linecap="round" stroke-linejoin="round"/></g><rect x="425.2" y="208.85" width="15" height="7.7" rx="3.85" fill="#3f6ec0"/><circle cx="436.3" cy="212.7" r="2.5" fill="#fff"/><rect x="476.1" y="212.55" width="14.2" height="6.9" rx="3.45" fill="#fff" stroke="#cacaca" stroke-width="0.8"/><circle cx="479.4" cy="216" r="2.35" fill="#fff" stroke="#cacaca" stroke-width="0.7"/><rect x="525.7" y="208.85" width="15" height="7.7" rx="3.85" fill="#3f6ec0"/><circle cx="536.8" cy="212.7" r="2.5" fill="#fff"/><rect x="575.7" y="212.55" width="14.2" height="6.9" rx="3.45" fill="#fff" stroke="#626262" stroke-width="0.8"/><circle cx="579" cy="216" r="2.35" fill="#fff" stroke="#626262" stroke-width="0.7"/><rect x="625.3" y="212.15" width="15" height="7.7" rx="3.85" fill="#3f6ec0"/><circle cx="636.4" cy="216" r="2.5" fill="#fff"/><rect x="676.1" y="212.55" width="14.2" height="6.9" rx="3.45" fill="#fff" stroke="#626262" stroke-width="0.8"/><circle cx="679.4" cy="216" r="2.35" fill="#fff" stroke="#626262" stroke-width="0.7"/></svg>
<span style="left:82.50px;top:231px;font-size:6.5px;color:#1e1e1e;-webkit-text-stroke:0.13px;transform:scaleX(0.9480);">016 - Columbus</span>
<svg style="left:0;top:0" width="800" height="500"><rect x="181.2" y="235.15" width="15" height="7.7" rx="3.85" fill="#3f6ec0"/><circle cx="192.3" cy="239" r="2.5" fill="#fff"/><rect x="250.6" y="232.15" width="68.5" height="13.3" rx="2" fill="#fff" stroke="#a2a2a2" stroke-width="1"/></svg>
<span style="left:257.40px;top:230px;font-size:6.7px;color:#2a2a2a;-webkit-text-stroke:0.13px;transform:scaleX(0.9498);">Avg of All Models</span>
<svg style="left:0;top:0" width="800" height="500"><g transform="translate(298.5 236)"><path d="M1 1 L4.8 4.8 M4.8 1 L1 4.8" stroke="#4a78c8" stroke-width="0.9" stroke-linecap="round"/></g><g transform="translate(307.6 236.55)"><path d="M1 1 L4.00 4.10 L7.00 1" fill="none" stroke="#3f6fc2" stroke-width="1.0" stroke-linecap="round" stroke-linejoin="round"/></g><rect x="330.7" y="232.15" width="68.5" height="13.3" rx="2" fill="#fff" stroke="#a2a2a2" stroke-width="1"/></svg>
<span style="left:337.50px;top:230px;font-size:6.7px;color:#2a2a2a;-webkit-text-stroke:0.13px;transform:scaleX(0.9502);">Bucket Forecast</span>
<svg style="left:0;top:0" width="800" height="500"><g transform="translate(378.6 236)"><path d="M1 1 L4.8 4.8 M4.8 1 L1 4.8" stroke="#4a78c8" stroke-width="0.9" stroke-linecap="round"/></g><g transform="translate(387.7 236.55)"><path d="M1 1 L4.00 4.10 L7.00 1" fill="none" stroke="#3f6fc2" stroke-width="1.0" stroke-linecap="round" stroke-linejoin="round"/></g><rect x="425.2" y="231.85" width="15" height="7.7" rx="3.85" fill="#3f6ec0"/><circle cx="436.3" cy="235.7" r="2.5" fill="#fff"/><rect x="476.1" y="235.55" width="14.2" height="6.9" rx="3.45" fill="#fff" stroke="#cacaca" stroke-width="0.8"/><circle cx="479.4" cy="239" r="2.35" fill="#fff" stroke="#cacaca" stroke-width="0.7"/><rect x="525.7" y="231.85" width="15" height="7.7" rx="3.85" fill="#3f6ec0"/><circle cx="536.8" cy="235.7" r="2.5" fill="#fff"/><rect x="575.7" y="235.55" width="14.2" height="6.9" rx="3.45" fill="#fff" stroke="#626262" stroke-width="0.8"/><circle cx="579" cy="239" r="2.35" fill="#fff" stroke="#626262" stroke-width="0.7"/><rect x="625.3" y="235.15" width="15" height="7.7" rx="3.85" fill="#3f6ec0"/><circle cx="636.4" cy="239" r="2.5" fill="#fff"/><rect x="676.1" y="235.55" width="14.2" height="6.9" rx="3.45" fill="#fff" stroke="#626262" stroke-width="0.8"/><circle cx="679.4" cy="239" r="2.35" fill="#fff" stroke="#626262" stroke-width="0.7"/></svg>
<span style="left:82.50px;top:254px;font-size:6.5px;color:#1e1e1e;-webkit-text-stroke:0.13px;transform:scaleX(0.9314);">021 - Central</span>
<svg style="left:0;top:0" width="800" height="500"><rect x="181.2" y="257.85" width="15" height="7.7" rx="3.85" fill="#3f6ec0"/><circle cx="192.3" cy="261.7" r="2.5" fill="#fff"/><rect x="250.6" y="254.85" width="68.5" height="13.3" rx="2" fill="#fff" stroke="#a2a2a2" stroke-width="1"/></svg>
<span style="left:257.40px;top:253px;font-size:6.7px;color:#2a2a2a;-webkit-text-stroke:0.13px;transform:scaleX(0.9498);">Avg of All Models</span>
<svg style="left:0;top:0" width="800" height="500"><g transform="translate(298.5 258.7)"><path d="M1 1 L4.8 4.8 M4.8 1 L1 4.8" stroke="#4a78c8" stroke-width="0.9" stroke-linecap="round"/></g><g transform="translate(307.6 259.25)"><path d="M1 1 L4.00 4.10 L7.00 1" fill="none" stroke="#3f6fc2" stroke-width="1.0" stroke-linecap="round" stroke-linejoin="round"/></g><rect x="330.7" y="254.85" width="68.5" height="13.3" rx="2" fill="#fff" stroke="#a2a2a2" stroke-width="1"/></svg>
<span style="left:337.50px;top:253px;font-size:6.7px;color:#2a2a2a;-webkit-text-stroke:0.13px;transform:scaleX(0.9502);">Bucket Forecast</span>
<svg style="left:0;top:0" width="800" height="500"><g transform="translate(378.6 258.7)"><path d="M1 1 L4.8 4.8 M4.8 1 L1 4.8" stroke="#4a78c8" stroke-width="0.9" stroke-linecap="round"/></g><g transform="translate(387.7 259.25)"><path d="M1 1 L4.00 4.10 L7.00 1" fill="none" stroke="#3f6fc2" stroke-width="1.0" stroke-linecap="round" stroke-linejoin="round"/></g><rect x="425.2" y="254.55" width="15" height="7.7" rx="3.85" fill="#3f6ec0"/><circle cx="436.3" cy="258.4" r="2.5" fill="#fff"/><rect x="476.1" y="258.25" width="14.2" height="6.9" rx="3.45" fill="#fff" stroke="#cacaca" stroke-width="0.8"/><circle cx="479.4" cy="261.7" r="2.35" fill="#fff" stroke="#cacaca" stroke-width="0.7"/><rect x="525.7" y="254.55" width="15" height="7.7" rx="3.85" fill="#3f6ec0"/><circle cx="536.8" cy="258.4" r="2.5" fill="#fff"/><rect x="575.7" y="258.25" width="14.2" height="6.9" rx="3.45" fill="#fff" stroke="#626262" stroke-width="0.8"/><circle cx="579" cy="261.7" r="2.35" fill="#fff" stroke="#626262" stroke-width="0.7"/><rect x="625.3" y="257.85" width="15" height="7.7" rx="3.85" fill="#3f6ec0"/><circle cx="636.4" cy="261.7" r="2.5" fill="#fff"/><rect x="676.1" y="258.25" width="14.2" height="6.9" rx="3.45" fill="#fff" stroke="#626262" stroke-width="0.8"/><circle cx="679.4" cy="261.7" r="2.35" fill="#fff" stroke="#626262" stroke-width="0.7"/></svg>
<span style="left:82.50px;top:276px;font-size:6.5px;color:#1e1e1e;-webkit-text-stroke:0.13px;transform:scaleX(0.9571);">024 - Louisville</span>
<svg style="left:0;top:0" width="800" height="500"><rect x="181.2" y="280.4" width="15" height="7.7" rx="3.85" fill="#3f6ec0"/><circle cx="192.3" cy="284.25" r="2.5" fill="#fff"/><rect x="250.6" y="277.4" width="68.5" height="13.3" rx="2" fill="#fff" stroke="#a2a2a2" stroke-width="1"/></svg>
<span style="left:257.40px;top:276px;font-size:6.7px;color:#2a2a2a;-webkit-text-stroke:0.13px;transform:scaleX(0.9498);">Avg of All Models</span>
<svg style="left:0;top:0" width="800" height="500"><g transform="translate(298.5 281.25)"><path d="M1 1 L4.8 4.8 M4.8 1 L1 4.8" stroke="#4a78c8" stroke-width="0.9" stroke-linecap="round"/></g><g transform="translate(307.6 281.8)"><path d="M1 1 L4.00 4.10 L7.00 1" fill="none" stroke="#3f6fc2" stroke-width="1.0" stroke-linecap="round" stroke-linejoin="round"/></g><rect x="330.7" y="277.4" width="68.5" height="13.3" rx="2" fill="#fff" stroke="#a2a2a2" stroke-width="1"/></svg>
<span style="left:337.50px;top:276px;font-size:6.7px;color:#2a2a2a;-webkit-text-stroke:0.13px;transform:scaleX(0.9502);">Bucket Forecast</span>
<svg style="left:0;top:0" width="800" height="500"><g transform="translate(378.6 281.25)"><path d="M1 1 L4.8 4.8 M4.8 1 L1 4.8" stroke="#4a78c8" stroke-width="0.9" stroke-linecap="round"/></g><g transform="translate(387.7 281.8)"><path d="M1 1 L4.00 4.10 L7.00 1" fill="none" stroke="#3f6fc2" stroke-width="1.0" stroke-linecap="round" stroke-linejoin="round"/></g><rect x="425.2" y="277.1" width="15" height="7.7" rx="3.85" fill="#3f6ec0"/><circle cx="436.3" cy="280.95" r="2.5" fill="#fff"/><rect x="476.1" y="280.8" width="14.2" height="6.9" rx="3.45" fill="#fff" stroke="#cacaca" stroke-width="0.8"/><circle cx="479.4" cy="284.25" r="2.35" fill="#fff" stroke="#cacaca" stroke-width="0.7"/><rect x="525.7" y="277.1" width="15" height="7.7" rx="3.85" fill="#3f6ec0"/><circle cx="536.8" cy="280.95" r="2.5" fill="#fff"/><rect x="575.7" y="280.8" width="14.2" height="6.9" rx="3.45" fill="#fff" stroke="#626262" stroke-width="0.8"/><circle cx="579" cy="284.25" r="2.35" fill="#fff" stroke="#626262" stroke-width="0.7"/><rect x="625.3" y="280.4" width="15" height="7.7" rx="3.85" fill="#3f6ec0"/><circle cx="636.4" cy="284.25" r="2.5" fill="#fff"/><rect x="676.1" y="280.8" width="14.2" height="6.9" rx="3.45" fill="#fff" stroke="#626262" stroke-width="0.8"/><circle cx="679.4" cy="284.25" r="2.35" fill="#fff" stroke="#626262" stroke-width="0.7"/></svg>
<span style="left:82.50px;top:299px;font-size:6.5px;color:#1e1e1e;-webkit-text-stroke:0.13px;transform:scaleX(0.9278);">025 - Delta</span>
<svg style="left:0;top:0" width="800" height="500"><rect x="181.2" y="303.1" width="15" height="7.7" rx="3.85" fill="#3f6ec0"/><circle cx="192.3" cy="306.95" r="2.5" fill="#fff"/><rect x="250.6" y="300.1" width="68.5" height="13.3" rx="2" fill="#fff" stroke="#a2a2a2" stroke-width="1"/></svg>
<span style="left:257.40px;top:298px;font-size:6.7px;color:#2a2a2a;-webkit-text-stroke:0.13px;transform:scaleX(0.9498);">Avg of All Models</span>
<svg style="left:0;top:0" width="800" height="500"><g transform="translate(298.5 303.95)"><path d="M1 1 L4.8 4.8 M4.8 1 L1 4.8" stroke="#4a78c8" stroke-width="0.9" stroke-linecap="round"/></g><g transform="translate(307.6 304.5)"><path d="M1 1 L4.00 4.10 L7.00 1" fill="none" stroke="#3f6fc2" stroke-width="1.0" stroke-linecap="round" stroke-linejoin="round"/></g><rect x="330.7" y="300.1" width="68.5" height="13.3" rx="2" fill="#fff" stroke="#a2a2a2" stroke-width="1"/></svg>
<span style="left:337.50px;top:298px;font-size:6.7px;color:#2a2a2a;-webkit-text-stroke:0.13px;transform:scaleX(0.9502);">Bucket Forecast</span>
<svg style="left:0;top:0" width="800" height="500"><g transform="translate(378.6 303.95)"><path d="M1 1 L4.8 4.8 M4.8 1 L1 4.8" stroke="#4a78c8" stroke-width="0.9" stroke-linecap="round"/></g><g transform="translate(387.7 304.5)"><path d="M1 1 L4.00 4.10 L7.00 1" fill="none" stroke="#3f6fc2" stroke-width="1.0" stroke-linecap="round" stroke-linejoin="round"/></g><rect x="425.2" y="299.8" width="15" height="7.7" rx="3.85" fill="#3f6ec0"/><circle cx="436.3" cy="303.65" r="2.5" fill="#fff"/><rect x="476.1" y="303.5" width="14.2" height="6.9" rx="3.45" fill="#fff" stroke="#cacaca" stroke-width="0.8"/><circle cx="479.4" cy="306.95" r="2.35" fill="#fff" stroke="#cacaca" stroke-width="0.7"/><rect x="525.7" y="299.8" width="15" height="7.7" rx="3.85" fill="#3f6ec0"/><circle cx="536.8" cy="303.65" r="2.5" fill="#fff"/><rect x="575.7" y="303.5" width="14.2" height="6.9" rx="3.45" fill="#fff" stroke="#626262" stroke-width="0.8"/><circle cx="579" cy="306.95" r="2.35" fill="#fff" stroke="#626262" stroke-width="0.7"/><rect x="625.3" y="303.1" width="15" height="7.7" rx="3.85" fill="#3f6ec0"/><circle cx="636.4" cy="306.95" r="2.5" fill="#fff"/><rect x="676.1" y="303.5" width="14.2" height="6.9" rx="3.45" fill="#fff" stroke="#626262" stroke-width="0.8"/><circle cx="679.4" cy="306.95" r="2.35" fill="#fff" stroke="#626262" stroke-width="0.7"/></svg>
<span style="left:82.50px;top:322px;font-size:6.5px;color:#1e1e1e;-webkit-text-stroke:0.13px;transform:scaleX(0.9420);">026 - Nashville</span>
<svg style="left:0;top:0" width="800" height="500"><rect x="181.2" y="325.75" width="15" height="7.7" rx="3.85" fill="#3f6ec0"/><circle cx="192.3" cy="329.6" r="2.5" fill="#fff"/><rect x="250.6" y="322.75" width="68.5" height="13.3" rx="2" fill="#fff" stroke="#a2a2a2" stroke-width="1"/></svg>
<span style="left:257.40px;top:321px;font-size:6.7px;color:#2a2a2a;-webkit-text-stroke:0.13px;transform:scaleX(0.9498);">Avg of All Models</span>
<svg style="left:0;top:0" width="800" height="500"><g transform="translate(298.5 326.6)"><path d="M1 1 L4.8 4.8 M4.8 1 L1 4.8" stroke="#4a78c8" stroke-width="0.9" stroke-linecap="round"/></g><g transform="translate(307.6 327.15)"><path d="M1 1 L4.00 4.10 L7.00 1" fill="none" stroke="#3f6fc2" stroke-width="1.0" stroke-linecap="round" stroke-linejoin="round"/></g><rect x="330.7" y="322.75" width="68.5" height="13.3" rx="2" fill="#fff" stroke="#a2a2a2" stroke-width="1"/></svg>
<span style="left:337.50px;top:321px;font-size:6.7px;color:#2a2a2a;-webkit-text-stroke:0.13px;transform:scaleX(0.9502);">Bucket Forecast</span>
<svg style="left:0;top:0" width="800" height="500"><g transform="translate(378.6 326.6)"><path d="M1 1 L4.8 4.8 M4.8 1 L1 4.8" stroke="#4a78c8" stroke-width="0.9" stroke-linecap="round"/></g><g transform="translate(387.7 327.15)"><path d="M1 1 L4.00 4.10 L7.00 1" fill="none" stroke="#3f6fc2" stroke-width="1.0" stroke-linecap="round" stroke-linejoin="round"/></g><rect x="425.2" y="322.45" width="15" height="7.7" rx="3.85" fill="#3f6ec0"/><circle cx="436.3" cy="326.3" r="2.5" fill="#fff"/><rect x="476.1" y="326.15" width="14.2" height="6.9" rx="3.45" fill="#fff" stroke="#cacaca" stroke-width="0.8"/><circle cx="479.4" cy="329.6" r="2.35" fill="#fff" stroke="#cacaca" stroke-width="0.7"/><rect x="525.7" y="322.45" width="15" height="7.7" rx="3.85" fill="#3f6ec0"/><circle cx="536.8" cy="326.3" r="2.5" fill="#fff"/><rect x="575.7" y="326.15" width="14.2" height="6.9" rx="3.45" fill="#fff" stroke="#626262" stroke-width="0.8"/><circle cx="579" cy="329.6" r="2.35" fill="#fff" stroke="#626262" stroke-width="0.7"/><rect x="625.3" y="325.75" width="15" height="7.7" rx="3.85" fill="#3f6ec0"/><circle cx="636.4" cy="329.6" r="2.5" fill="#fff"/><rect x="676.1" y="326.15" width="14.2" height="6.9" rx="3.45" fill="#fff" stroke="#626262" stroke-width="0.8"/><circle cx="679.4" cy="329.6" r="2.35" fill="#fff" stroke="#626262" stroke-width="0.7"/></svg>
<span style="left:82.50px;top:344px;font-size:6.5px;color:#1e1e1e;-webkit-text-stroke:0.13px;transform:scaleX(0.9589);">029 - Mid-Atlantic</span>
<svg style="left:0;top:0" width="800" height="500"><rect x="181.2" y="348.4" width="15" height="7.7" rx="3.85" fill="#3f6ec0"/><circle cx="192.3" cy="352.25" r="2.5" fill="#fff"/><rect x="250.6" y="345.4" width="68.5" height="13.3" rx="2" fill="#fff" stroke="#a2a2a2" stroke-width="1"/></svg>
<span style="left:257.40px;top:344px;font-size:6.7px;color:#2a2a2a;-webkit-text-stroke:0.13px;transform:scaleX(0.9498);">Avg of All Models</span>
<svg style="left:0;top:0" width="800" height="500"><g transform="translate(298.5 349.25)"><path d="M1 1 L4.8 4.8 M4.8 1 L1 4.8" stroke="#4a78c8" stroke-width="0.9" stroke-linecap="round"/></g><g transform="translate(307.6 349.8)"><path d="M1 1 L4.00 4.10 L7.00 1" fill="none" stroke="#3f6fc2" stroke-width="1.0" stroke-linecap="round" stroke-linejoin="round"/></g><rect x="330.7" y="345.4" width="68.5" height="13.3" rx="2" fill="#fff" stroke="#a2a2a2" stroke-width="1"/></svg>
<span style="left:337.50px;top:344px;font-size:6.7px;color:#2a2a2a;-webkit-text-stroke:0.13px;transform:scaleX(0.9502);">Bucket Forecast</span>
<svg style="left:0;top:0" width="800" height="500"><g transform="translate(378.6 349.25)"><path d="M1 1 L4.8 4.8 M4.8 1 L1 4.8" stroke="#4a78c8" stroke-width="0.9" stroke-linecap="round"/></g><g transform="translate(387.7 349.8)"><path d="M1 1 L4.00 4.10 L7.00 1" fill="none" stroke="#3f6fc2" stroke-width="1.0" stroke-linecap="round" stroke-linejoin="round"/></g><rect x="425.2" y="345.1" width="15" height="7.7" rx="3.85" fill="#3f6ec0"/><circle cx="436.3" cy="348.95" r="2.5" fill="#fff"/><rect x="476.1" y="348.8" width="14.2" height="6.9" rx="3.45" fill="#fff" stroke="#cacaca" stroke-width="0.8"/><circle cx="479.4" cy="352.25" r="2.35" fill="#fff" stroke="#cacaca" stroke-width="0.7"/><rect x="525.7" y="345.1" width="15" height="7.7" rx="3.85" fill="#3f6ec0"/><circle cx="536.8" cy="348.95" r="2.5" fill="#fff"/><rect x="575.7" y="348.8" width="14.2" height="6.9" rx="3.45" fill="#fff" stroke="#626262" stroke-width="0.8"/><circle cx="579" cy="352.25" r="2.35" fill="#fff" stroke="#626262" stroke-width="0.7"/><rect x="625.3" y="348.4" width="15" height="7.7" rx="3.85" fill="#3f6ec0"/><circle cx="636.4" cy="352.25" r="2.5" fill="#fff"/><rect x="676.1" y="348.8" width="14.2" height="6.9" rx="3.45" fill="#fff" stroke="#626262" stroke-width="0.8"/><circle cx="679.4" cy="352.25" r="2.35" fill="#fff" stroke="#626262" stroke-width="0.7"/></svg>
<span style="left:82.50px;top:367px;font-size:6.5px;color:#1e1e1e;-webkit-text-stroke:0.13px;transform:scaleX(0.9551);">034 - Houston</span>
<svg style="left:0;top:0" width="800" height="500"><rect x="181.2" y="371.1" width="15" height="7.7" rx="3.85" fill="#3f6ec0"/><circle cx="192.3" cy="374.95" r="2.5" fill="#fff"/><rect x="250.6" y="368.1" width="68.5" height="13.3" rx="2" fill="#fff" stroke="#a2a2a2" stroke-width="1"/></svg>
<span style="left:257.40px;top:366px;font-size:6.7px;color:#2a2a2a;-webkit-text-stroke:0.13px;transform:scaleX(0.9498);">Avg of All Models</span>
<svg style="left:0;top:0" width="800" height="500"><g transform="translate(298.5 371.95)"><path d="M1 1 L4.8 4.8 M4.8 1 L1 4.8" stroke="#4a78c8" stroke-width="0.9" stroke-linecap="round"/></g><g transform="translate(307.6 372.5)"><path d="M1 1 L4.00 4.10 L7.00 1" fill="none" stroke="#3f6fc2" stroke-width="1.0" stroke-linecap="round" stroke-linejoin="round"/></g><rect x="330.7" y="368.1" width="68.5" height="13.3" rx="2" fill="#fff" stroke="#a2a2a2" stroke-width="1"/></svg>
<span style="left:337.50px;top:366px;font-size:6.7px;color:#2a2a2a;-webkit-text-stroke:0.13px;transform:scaleX(0.9502);">Bucket Forecast</span>
<svg style="left:0;top:0" width="800" height="500"><g transform="translate(378.6 371.95)"><path d="M1 1 L4.8 4.8 M4.8 1 L1 4.8" stroke="#4a78c8" stroke-width="0.9" stroke-linecap="round"/></g><g transform="translate(387.7 372.5)"><path d="M1 1 L4.00 4.10 L7.00 1" fill="none" stroke="#3f6fc2" stroke-width="1.0" stroke-linecap="round" stroke-linejoin="round"/></g><rect x="425.2" y="367.8" width="15" height="7.7" rx="3.85" fill="#3f6ec0"/><circle cx="436.3" cy="371.65" r="2.5" fill="#fff"/><rect x="476.1" y="371.5" width="14.2" height="6.9" rx="3.45" fill="#fff" stroke="#cacaca" stroke-width="0.8"/><circle cx="479.4" cy="374.95" r="2.35" fill="#fff" stroke="#cacaca" stroke-width="0.7"/><rect x="525.7" y="371.1" width="15" height="7.7" rx="3.85" fill="#3f6ec0"/><circle cx="536.8" cy="374.95" r="2.5" fill="#fff"/><rect x="575.7" y="371.5" width="14.2" height="6.9" rx="3.45" fill="#fff" stroke="#626262" stroke-width="0.8"/><circle cx="579" cy="374.95" r="2.35" fill="#fff" stroke="#626262" stroke-width="0.7"/><rect x="625.3" y="371.1" width="15" height="7.7" rx="3.85" fill="#3f6ec0"/><circle cx="636.4" cy="374.95" r="2.5" fill="#fff"/><rect x="676.1" y="371.5" width="14.2" height="6.9" rx="3.45" fill="#fff" stroke="#626262" stroke-width="0.8"/><circle cx="679.4" cy="374.95" r="2.35" fill="#fff" stroke="#626262" stroke-width="0.7"/><rect x="650.4" y="394.2" width="31.5" height="18.4" rx="3" fill="#3f6ec0"/></svg>
<span style="left:659.55px;top:395px;font-size:6.6px;color:#fff;-webkit-text-stroke:0.13px;transform:scaleX(0.8974);">Save</span>
<svg style="left:0;top:0" width="800" height="500"><rect x="689.62" y="394.62" width="33.75" height="17.55" rx="2.58" fill="#fff" stroke="#585858" stroke-width="0.85"/></svg>
<span style="left:696.75px;top:395px;font-size:6.6px;color:#333;-webkit-text-stroke:0.13px;transform:scaleX(0.9491);">Cancel</span>
</div></div>
</body></html>
